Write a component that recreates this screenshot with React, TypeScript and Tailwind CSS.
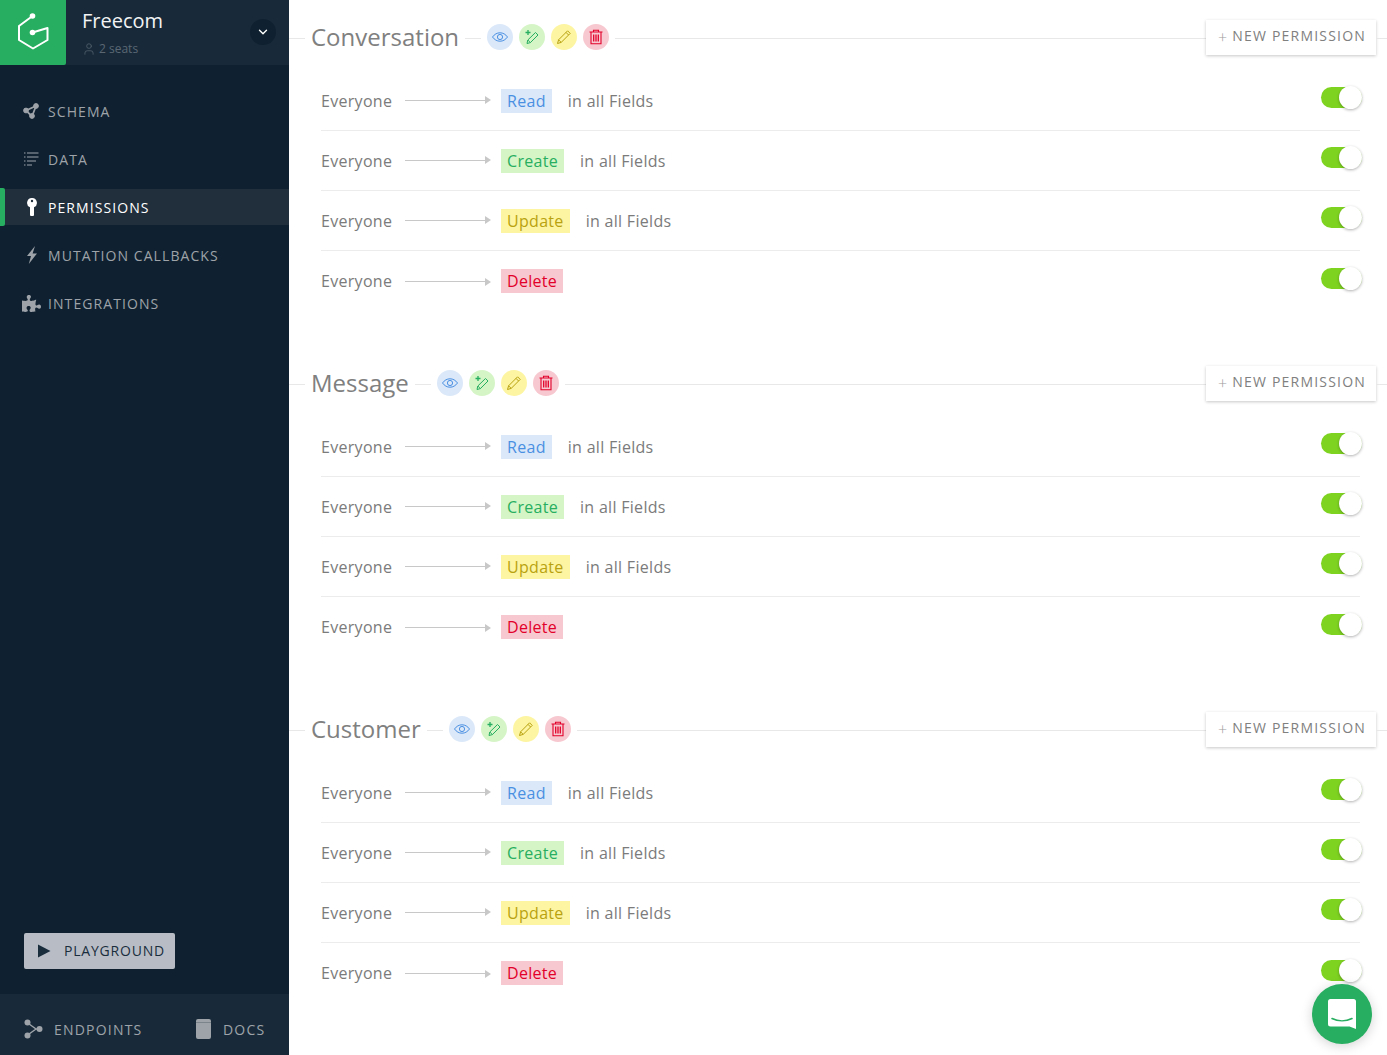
import { ChevronDown, User } from "lucide-react";
import { FaPuzzlePiece } from "react-icons/fa";

type Op = "Read" | "Create" | "Update" | "Delete";

const badgeClass: Record<Op, string> = {
  Read: "bg-[#dbe8f9] text-[#4a90e2]",
  Create: "bg-[#d5f5c6] text-[#27ae60]",
  Update: "bg-[#fdf5a2] text-[#b9a20f]",
  Delete: "bg-[#f7c8cf] text-[#e2002a]",
};

const ops: Op[] = ["Read", "Create", "Update", "Delete"];

function EyeIcon() {
  return (
    <svg width="16" height="16" viewBox="0 0 16 16" fill="none" stroke="#4a90e2" strokeWidth="1">
      <path d="M0.5 8C2.5 5.2 5 3.8 8 3.8s5.5 1.4 7.5 4.2c-2 2.8-4.5 4.2-7.5 4.2S2.5 10.8.5 8Z" />
      <circle cx="8" cy="8" r="2.6" />
    </svg>
  );
}

function PencilPlusIcon() {
  return (
    <svg width="16" height="16" viewBox="0 0 16 16" fill="none" stroke="#27ae60" strokeWidth="1">
      <path d="M3 14.5 3.8 11 11.5 3.5 14 6 6.4 13.6 3 14.5Z" />
      <path d="M3.8 11 6.4 13.6" />
      <path d="M4 1v5M1.5 3.5h5" strokeWidth="1.3" />
    </svg>
  );
}

function PencilIcon() {
  return (
    <svg width="16" height="16" viewBox="0 0 16 16" fill="none" stroke="#b9a20f" strokeWidth="1">
      <path d="M1.5 14.5 2.6 10.8 11.6 1.8 14.2 4.4 5.2 13.4 1.5 14.5Z" />
      <path d="M2.6 10.8 5.2 13.4M10 3.4 12.6 6" />
    </svg>
  );
}

function TrashIcon() {
  return (
    <svg width="16" height="16" viewBox="0 0 16 16" fill="none" stroke="#e2002a" strokeWidth="1.1">
      <path d="M1.5 3h13M5.5 3V1.2h5V3" />
      <path d="M3 3v11.8h10V3" />
      <path d="M5.7 5.5v7M8 5.5v7M10.3 5.5v7" strokeWidth="1.3" />
    </svg>
  );
}

function Toggle() {
  return (
    <div className="relative mb-[6px] h-[21px] w-[41px] shrink-0 rounded-full bg-[#7ed321]">
      <div className="absolute -top-px left-[18px] h-[23px] w-[23px] rounded-full bg-white shadow-[0_1px_3px_rgba(0,0,0,0.3)]" />
    </div>
  );
}

function Row({ op, last }: { op: Op; last: boolean }) {
  return (
    <div className={`flex h-[60px] items-center text-[16px] font-medium tracking-[0.3px] text-[#7b7b7b] ${last ? "" : "border-b border-[#ececec]"}`}>
      <span className="w-[84px]">Everyone</span>
      <div className={`flex w-[96px] items-center ${last ? "pt-[1px]" : "pb-[1px]"}`}>
        <div className="h-px w-[80px] bg-[#c8c8c8]" />
        <div className="h-0 w-0 border-y-[4px] border-l-[6px] border-y-transparent border-l-[#c8c8c8]" />
      </div>
      <span className={`flex h-[24px] items-center px-[6px] font-medium ${badgeClass[op]}`}>{op}</span>
      <span className="ml-[16px] flex-1">{op === "Delete" ? "" : "in all Fields"}</span>
      <div className="mr-[-2px]">
        <Toggle />
      </div>
    </div>
  );
}

function Section({ title }: { title: string }) {
  return (
    <section className="pt-[20px] pb-[35px]">
      <div className="flex h-[36px] items-center">
        <div className="h-px w-[16px] bg-[#e8e8e8]" />
        <h2 className="mb-[2px] ml-[6px] text-[24px] leading-[34px] font-normal text-[#808080]">{title}</h2>
        <div className="ml-[6px] h-px w-[16px] bg-[#e8e8e8]" />
        <div className="mx-[6px] mb-[2px] flex gap-[6px]">
          <span className="flex h-[26px] w-[26px] items-center justify-center rounded-full bg-[#dbe8f9]">
            <EyeIcon />
          </span>
          <span className="flex h-[26px] w-[26px] items-center justify-center rounded-full bg-[#d5f5c6]">
            <PencilPlusIcon />
          </span>
          <span className="flex h-[26px] w-[26px] items-center justify-center rounded-full bg-[#fdf5a2]">
            <PencilIcon />
          </span>
          <span className="flex h-[26px] w-[26px] items-center justify-center rounded-full bg-[#f7c8cf]">
            <TrashIcon />
          </span>
        </div>
        <div className="h-px flex-1 bg-[#e8e8e8]" />
        <button className="mb-[1px] flex h-[35px] w-[170px] items-center justify-end bg-white pr-[10px] pb-[4px] text-[14px] font-medium tracking-[1.2px] text-[#808080] shadow-[0_1px_3px_rgba(0,0,0,0.22)]">
          <span className="mt-[3px] mr-[4px] text-[16px] font-light text-[#a0a0a0]">+</span>
          NEW PERMISSION
        </button>
        <div className="h-px w-[11px] bg-[#e8e8e8]" />
      </div>
      <div className="mt-[15px] mr-[27px] ml-[32px]">
        {ops.map((op, i) => (
          <Row key={op} op={op} last={i === 3} />
        ))}
      </div>
    </section>
  );
}

function SchemaIcon() {
  return (
    <svg width="16" height="16" viewBox="0 0 16 16" fill="#9ea3a9" stroke="#9ea3a9">
      <path d="M3 7.5 13 3 9 13.5Z" fill="none" strokeWidth="1.8" />
      <circle cx="3" cy="7.5" r="2.4" />
      <circle cx="13" cy="3" r="2.4" />
      <circle cx="9" cy="13" r="2.4" />
    </svg>
  );
}

function DataIcon() {
  return (
    <svg width="16" height="16" viewBox="0 0 16 16" stroke="#9ea3a9" strokeWidth="1.1" fill="none">
      <path d="M1 2h1.5M1 6h1.5M1 10h1.5M1 14h1.5" />
      <path d="M4 2h11.5M4 6h11.5M4 10h9M4 14h5" />
    </svg>
  );
}

function KeyIcon() {
  return (
    <svg width="10" height="18" viewBox="0 0 10 18" fill="#ffffff" className="ml-[2px]">
      <path d="M5 0a4.8 4.8 0 0 1 2 9.2V17a1 1 0 0 1-1 1H4.4a1.3 1.3 0 0 1-1.4-1.3V9.2A4.8 4.8 0 0 1 5 0Z" />
      <circle cx="5" cy="3" r="1.2" fill="#21303e" />
    </svg>
  );
}

function BoltIcon() {
  return (
    <svg width="10" height="18" viewBox="0 0 10 18" fill="#9ea3a9" className="ml-[2px]">
      <path d="M8 0 0 10h4L1.8 18 10 7.4H5.6L8 0Z" />
    </svg>
  );
}

function NavItem({ label, icon, active }: { label: string; icon: React.ReactNode; active?: boolean }) {
  return (
    <div className="relative flex h-[48px] items-center text-[14px] tracking-[1.08px]">
      {active && <div className="absolute top-[6px] right-0 left-0 h-[36px] bg-[#212f3d]" />}
      {active && <div className="absolute top-[5px] left-0 h-[38px] w-[5px] rounded-r-[2px] bg-[#27ae60]" />}
      <div className="relative flex w-[48px] justify-center pl-[14px]">{icon}</div>
      <span className={`relative font-medium ${active ? "text-white" : "text-[#9ea3a9]"}`}>{label}</span>
    </div>
  );
}

function Sidebar() {
  return (
    <aside className="flex h-full w-[289px] shrink-0 flex-col bg-[#0f2130]">
      <div className="flex h-[65px] bg-[#182a3a]">
        <div className="h-[65px] w-[66px] rounded-br-[2px] bg-[#27ae60]">
          <svg width="66" height="65" viewBox="0 0 66 65" fill="none" stroke="#ffffff" strokeWidth="2" strokeLinejoin="round">
            <path d="M32.5 16 19 26V40L33 48.5 47.5 40V28L32.5 32.5" />
            <circle cx="32.5" cy="16" r="2.8" fill="#ffffff" stroke="none" />
            <circle cx="32.5" cy="32.5" r="2.8" fill="#ffffff" stroke="none" />
          </svg>
        </div>
        <div className="ml-[16px] flex-1 pt-[7px]">
          <div className="text-[20px] leading-[28px] text-[#f2f3f4]">Freecom</div>
          <div className="mt-[5px] flex items-center text-[12px] leading-[18px] text-[#5a6773]">
            <User size={14} strokeWidth={1.2} className="mr-[3px]" />
            2 seats
          </div>
        </div>
        <div className="mt-[19px] mr-[13px] flex h-[26px] w-[26px] items-center justify-center rounded-full bg-[#0f2130]">
          <ChevronDown size={14} strokeWidth={2.4} color="#ffffff" />
        </div>
      </div>
      <nav className="mt-[22px] flex flex-col">
        <NavItem label="SCHEMA" icon={<SchemaIcon />} />
        <NavItem label="DATA" icon={<DataIcon />} />
        <NavItem label="PERMISSIONS" icon={<KeyIcon />} active />
        <NavItem label="MUTATION CALLBACKS" icon={<BoltIcon />} />
        <NavItem label="INTEGRATIONS" icon={<FaPuzzlePiece size={19} color="#9ea3a9" />} />
      </nav>
      <div className="mt-auto mb-[25px] ml-[24px]">
        <button className="flex h-[36px] w-[151px] items-center rounded-[2px] bg-[#b8bdc5] pb-[1px] pl-[13px] text-[14px] font-medium tracking-[0.8px] text-[#1a2d3d]">
          <svg width="14" height="14" viewBox="0 0 14 14" fill="#1a2d3d" className="mt-[1px] mr-[13px]">
            <path d="M1 0.5 13.5 7 1 13.5Z" />
          </svg>
          PLAYGROUND
        </button>
      </div>
      <div className="flex h-[61px] items-center bg-[#182a3a] pt-[10px] pl-[24px] text-[14px] font-medium tracking-[1.2px] text-[#9ea3a9]">
        <svg width="20" height="20" viewBox="0 0 20 20" fill="#9ea3a9" stroke="#9ea3a9" className="mr-[10px] mb-[2px]">
          <path d="M3 3.5 12 10 3 16.5M12 10h6" fill="none" strokeWidth="1.4" />
          <circle cx="3.5" cy="3.5" r="3" stroke="none" />
          <circle cx="3.5" cy="16.5" r="3" stroke="none" />
          <circle cx="15.5" cy="10" r="3" stroke="none" />
        </svg>
        <span className="w-[142px]">ENDPOINTS</span>
        <span className="mr-[12px] mb-[2px] flex h-[20px] w-[15px] flex-col rounded-[2px] bg-[#9ea3a9]">
          <span className="mt-[3px] h-px w-full bg-[#7b838b]" />
        </span>
        <span>DOCS</span>
      </div>
    </aside>
  );
}

export default function App() {
  return (
    <div className="relative flex h-[1055px] w-full overflow-hidden bg-white font-['Open_Sans',sans-serif]">
      <Sidebar />
      <main className="h-full flex-1">
        <Section title="Conversation" />
        <Section title="Message" />
        <Section title="Customer" />
      </main>
      <div className="absolute top-[984px] left-[1312px] flex h-[60px] w-[60px] items-center justify-center rounded-full bg-[#27ae60] shadow-[0_2px_12px_rgba(0,0,0,0.18)]">
        <svg width="28" height="30" viewBox="0 0 28 30" fill="#ffffff">
          <path d="M2.5 0h23A2.5 2.5 0 0 1 28 2.5V30l-6.5-2.6H2.5A2.5 2.5 0 0 1 0 24.9V2.5A2.5 2.5 0 0 1 2.5 0Z" />
          <path d="M4 19.5c6 3 14 3 20 0" fill="none" stroke="#27ae60" strokeWidth="1.6" strokeLinecap="round" />
        </svg>
      </div>
    </div>
  );
}
